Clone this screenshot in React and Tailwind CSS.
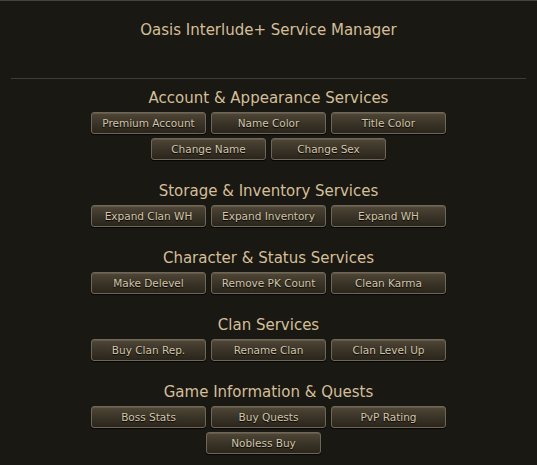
import React from 'react';

const sections = [
  {
    title: 'Account & Appearance Services',
    rows: [
      ['Premium Account', 'Name Color', 'Title Color'],
      ['Change Name', 'Change Sex'],
    ],
  },
  {
    title: 'Storage & Inventory Services',
    rows: [['Expand Clan WH', 'Expand Inventory', 'Expand WH']],
  },
  {
    title: 'Character & Status Services',
    rows: [['Make Delevel', 'Remove PK Count', 'Clean Karma']],
  },
  {
    title: 'Clan Services',
    rows: [['Buy Clan Rep.', 'Rename Clan', 'Clan Level Up']],
  },
  {
    title: 'Game Information & Quests',
    rows: [['Boss Stats', 'Buy Quests', 'PvP Rating'], ['Nobless Buy']],
  },
];

function GameButton({ label }) {
  return (
    <button className="w-[115px] h-[22px] rounded-[3px] border border-[#6e6758] bg-gradient-to-b from-[#4f4737] via-[#3b3428] to-[#2a251c] shadow-[inset_0_1px_0_rgba(255,240,210,0.12),0_1px_1px_rgba(0,0,0,0.8)] text-[10.5px] leading-none text-[#d3c6a8] [text-shadow:0_1px_1px_#000]">
      {label}
    </button>
  );
}

export default function App() {
  return (
    <div className="w-[537px] h-[465px] bg-[#1a1813] border-t border-[#4a4438] font-['DejaVu_Sans',sans-serif] overflow-hidden">
      <h1 className="pt-[19px] text-center text-[15px] leading-5 text-[#d4bf99]">
        Oasis Interlude+ Service Manager
      </h1>
      <div className="mx-[11px] mt-[38px] h-px bg-[#3f3c37]" />

      {sections.map((s, i) => (
        <div key={s.title} className={i === 0 ? 'mt-[9px]' : 'mt-[21px]'}>
          <h2 className="text-center text-[15px] leading-5 text-[#d4bf99]">{s.title}</h2>
          <div className="mt-[4px] flex flex-col gap-[4px]">
            {s.rows.map((row, j) => (
              <div
                key={j}
                className={row.length === 1 ? 'flex justify-center gap-[5px] pr-[10px]' : 'flex justify-center gap-[5px]'}
              >
                {row.map((b) => (
                  <GameButton key={b} label={b} />
                ))}
              </div>
            ))}
          </div>
        </div>
      ))}
    </div>
  );
}
